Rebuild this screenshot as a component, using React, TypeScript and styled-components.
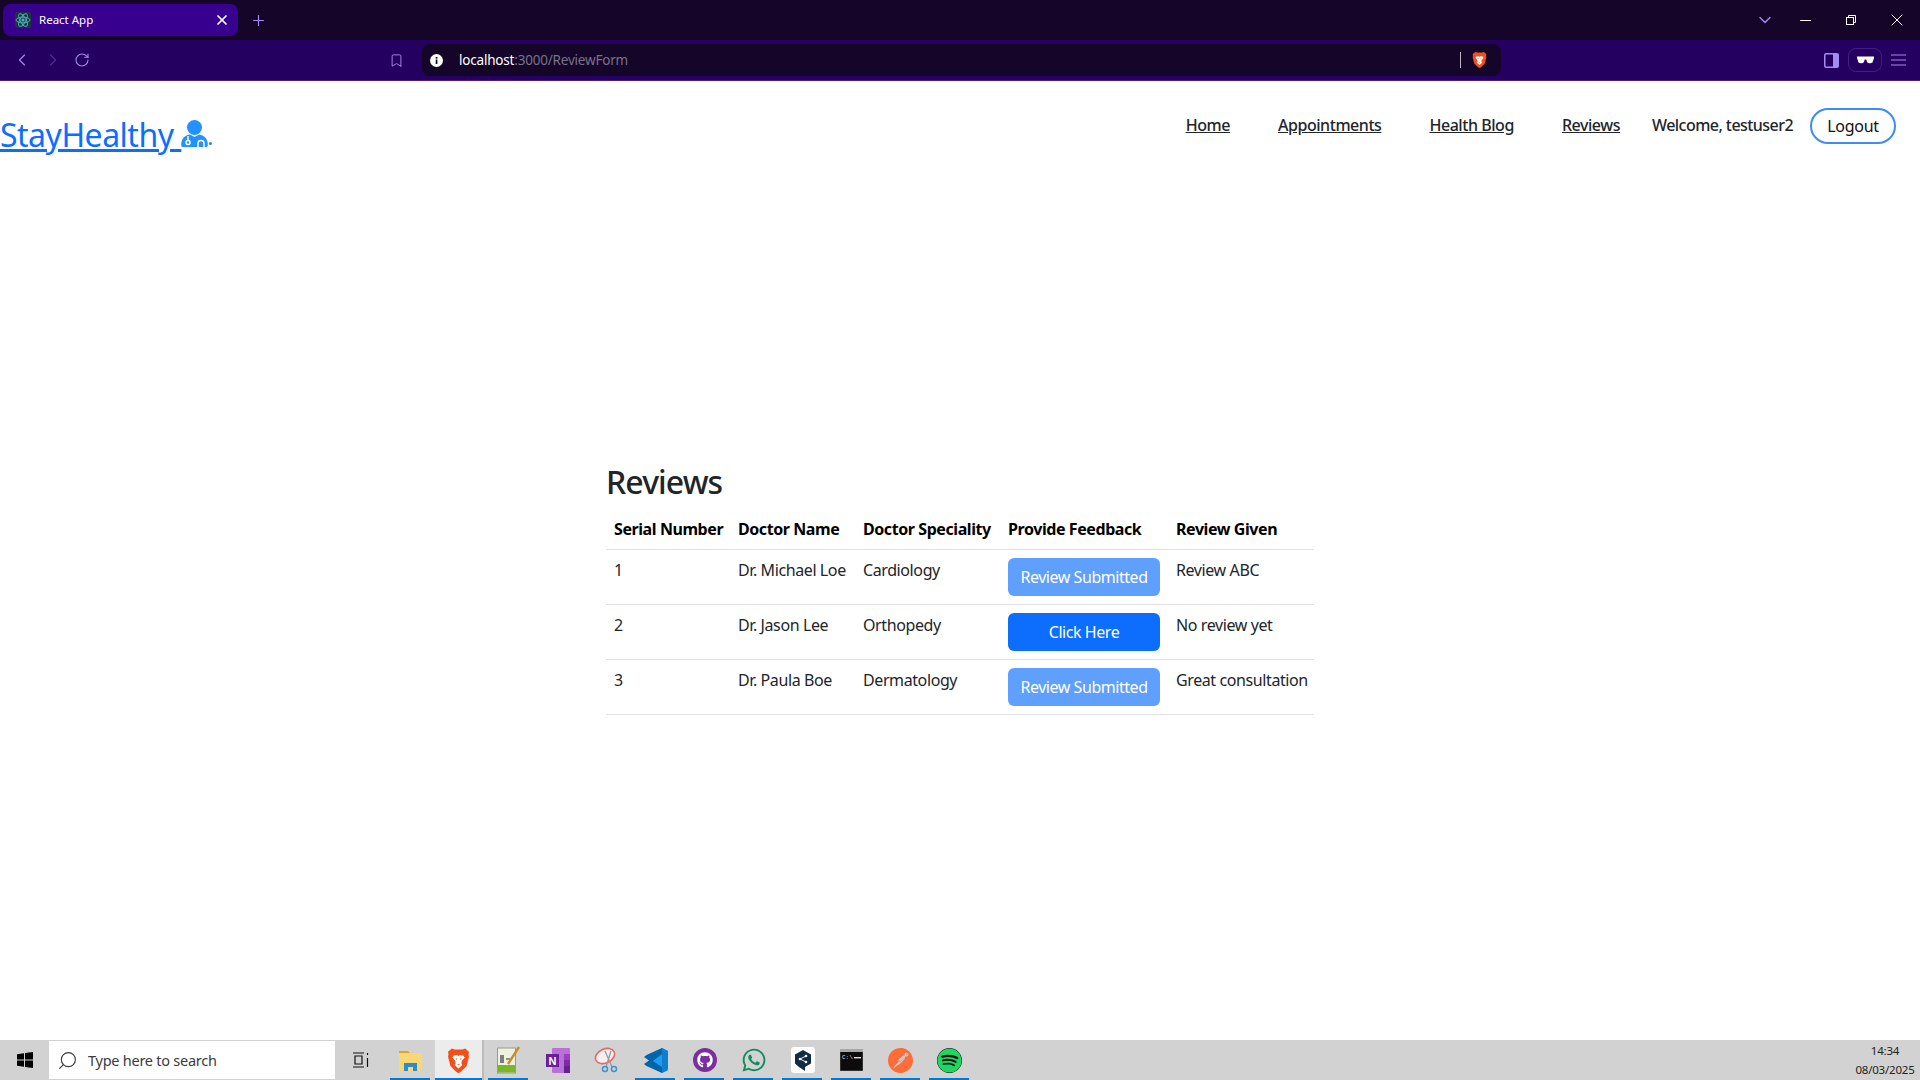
import styled, { createGlobalStyle } from 'styled-components'
import { ChevronDown, ChevronLeft, ChevronRight, Bookmark, Minus, Plus, RotateCw, X, Search } from 'lucide-react'
import { FaGithub, FaWhatsapp, FaSpotify } from 'react-icons/fa'
import { SiPostman } from 'react-icons/si'
import type { ReactNode } from 'react'

const GlobalStyle = createGlobalStyle`
  html, body {
    margin: 0;
    padding: 0;
    height: 100%;
    background: #fff;
  }
  * { box-sizing: border-box; }
  body {
    font-family: "Noto Sans", "Open Sans", sans-serif;
    color: #212529;
  }
`

const Screen = styled.div`
  width: 1920px;
  height: 1080px;
  display: flex;
  flex-direction: column;
  overflow: hidden;
`

/* browser chrome */
const TabStrip = styled.div`
  height: 40px;
  background: #150529;
  display: flex;
  align-items: center;
  padding-left: 3px;
  color: #a58cf0;
`

const Tab = styled.div`
  width: 235px;
  height: 32px;
  background: #38008e;
  border-radius: 8px;
  display: flex;
  align-items: center;
  padding: 0 8px 0 12px;
  color: #fff;
  font-size: 11.5px;
`

const TabTitle = styled.span`
  margin: 0 0 2px 8px;
  flex: 1;
`

const NewTab = styled.div`
  margin-left: 12px;
  display: flex;
`

const WindowControls = styled.div`
  margin-left: auto;
  display: flex;
  align-items: center;
  color: #fff;
`

const TabList = styled.span`
  width: 34px;
  display: flex;
  justify-content: center;
  color: #a58cf0;
`

const WindowButton = styled.span`
  width: 46px;
  display: flex;
  justify-content: center;
`

const Toolbar = styled.div`
  height: 41px;
  background: #240060;
  border-bottom: 1px solid #4a1a8c;
  display: flex;
  align-items: center;
  padding: 0 14px 0 12px;
  color: #a58cf0;
`

const NavButtons = styled.div`
  display: flex;
  align-items: center;
  gap: 11px;
  margin-right: 299px;
`

const UrlBar = styled.div`
  width: 1079px;
  height: 32px;
  margin-left: 18px;
  border-radius: 8px;
  background: #150529;
  display: flex;
  align-items: center;
  padding: 0 14px 0 8px;
  font-size: 13.5px;
  color: #fff;
`

const UrlText = styled.span`
  margin-left: 16px;
  flex: 1;
  letter-spacing: -0.2px;
`

const UrlMuted = styled.span`
  color: #78728a;
`

const UrlDivider = styled.span`
  width: 1px;
  height: 16px;
  background: #b9b4c4;
  margin-right: 11px;
`

const ToolbarRight = styled.div`
  margin-left: auto;
  display: flex;
  align-items: center;
  gap: 9px;
`

const GlassesBox = styled.div`
  width: 34px;
  height: 24px;
  border: 1px solid #43207f;
  border-radius: 8px;
  display: flex;
  align-items: center;
  justify-content: center;
`

/* page */
const Page = styled.main`
  flex: 1;
  background: #fff;
  display: flex;
  flex-direction: column;
`

const Header = styled.header`
  height: 86px;
  display: flex;
  justify-content: space-between;
  padding-right: 24px;
`

const Logo = styled.a`
  display: flex;
  align-items: flex-start;
  padding-top: 30px;
  font-size: 32px;
  line-height: 48px;
  color: #0d6efd;
  text-decoration: underline;
  white-space: pre;
  letter-spacing: -0.5px;
`

const LogoMark = styled.span`
  display: flex;
  align-items: flex-end;
  height: 27px;
  margin-top: 9px;
  color: #2192ff;
`

const LogoDot = styled.span`
  width: 3px;
  height: 3px;
  margin: 0 0 2px 1px;
  border-radius: 50%;
  background: #2b7cd6;
`

const Menu = styled.nav`
  display: flex;
  align-items: flex-start;
  padding-top: 27px;
`

const MenuLink = styled.a`
  font-size: 16px;
  line-height: 34px;
  font-weight: 500;
  color: #212529;
  text-decoration: underline;
  margin-right: 48px;
  letter-spacing: -0.45px;
  &:nth-child(4) { margin-right: 32px; }
`

const Welcome = styled.span`
  font-size: 16px;
  line-height: 34px;
  font-weight: 500;
  color: #212529;
  letter-spacing: -0.55px;
  margin-right: 17px;
`

const LogoutButton = styled.button`
  width: 86px;
  height: 36px;
  border: 2px solid #3f8bf5;
  border-radius: 18px;
  background: #fff;
  font: inherit;
  font-size: 16px;
  color: #111;
  letter-spacing: -0.3px;
  padding: 0;
`

const Content = styled.section`
  width: 708px;
  margin: 0 0 0 606px;
  padding-top: 294px;
`

const Title = styled.h1`
  margin: 0 0 7px;
  font-size: 32px;
  line-height: 42px;
  font-weight: 500;
  color: #212529;
  letter-spacing: -0.9px;
`

const Table = styled.table`
  width: 708px;
  table-layout: fixed;
  border-collapse: collapse;
  font-size: 16px;
  letter-spacing: -0.4px;
`

const HeadCell = styled.th`
  height: 39px;
  padding: 8px;
  text-align: left;
  font-weight: 700;
  color: #000;
  border-bottom: 1px solid #dee2e6;
  white-space: nowrap;
  letter-spacing: -0.42px;
`

const Cell = styled.td`
  height: 55px;
  padding: 8px;
  line-height: 24px;
  vertical-align: top;
  color: #212529;
  border-bottom: 1px solid #dee2e6;
  white-space: nowrap;
`

const FeedbackButton = styled.button<{ $done?: boolean }>`
  width: 152px;
  height: 38px;
  border: 0;
  border-radius: 6px;
  background: ${p => (p.$done ? '#5f9ffe' : '#0d6efd')};
  color: #fff;
  font: inherit;
  letter-spacing: -0.45px;
  padding: 0;
  display: block;
`

/* taskbar */
const Taskbar = styled.footer`
  height: 40px;
  background: #d2d2d2;
  display: flex;
  align-items: stretch;
  position: relative;
`

const StartButton = styled.div`
  width: 49px;
  display: flex;
  align-items: center;
  justify-content: center;
`

const SearchBox = styled.div`
  width: 286px;
  margin: 1px 0;
  background: #fff;
  display: flex;
  align-items: center;
  padding-left: 8px;
  gap: 10px;
  font-size: 14.5px;
  color: #3b3b3b;
  letter-spacing: -0.25px;
`

const TaskView = styled.div`
  width: 51px;
  display: flex;
  align-items: center;
  justify-content: center;
`

const AppCell = styled.div<{ $active?: boolean; $open?: boolean }>`
  width: 49px;
  position: relative;
  display: flex;
  align-items: center;
  justify-content: center;
  background: ${p => (p.$active ? '#ececec' : 'transparent')};
  border-right: ${p => (p.$active ? '2px solid #bcbcbc' : '0')};
  &::after {
    content: '';
    display: ${p => (p.$open ? 'block' : 'none')};
    position: absolute;
    left: ${p => (p.$active ? '0' : '4px')};
    right: ${p => (p.$active ? '0' : '5px')};
    bottom: 0;
    height: 2px;
    background: #0078d4;
  }
`

const Clock = styled.div`
  margin-left: auto;
  width: 70px;
  display: flex;
  flex-direction: column;
  align-items: center;
  justify-content: center;
  gap: 4px;
  font-size: 11.5px;
  line-height: 15px;
  color: #222;
  letter-spacing: -0.2px;
`

const RoundBadge = styled.span<{ $bg: string }>`
  width: 24px;
  height: 24px;
  border-radius: 50%;
  background: ${p => p.$bg};
  display: flex;
  align-items: center;
  justify-content: center;
  color: #fff;
`

function ReactFavicon() {
  return (
    <svg width="16" height="16" viewBox="0 0 16 16">
      <rect width="16" height="16" rx="2" fill="#20333a" />
      <g fill="none" stroke="#4db6c6" strokeWidth="0.9">
        <ellipse cx="8" cy="8" rx="7" ry="2.8" />
        <ellipse cx="8" cy="8" rx="7" ry="2.8" transform="rotate(60 8 8)" />
        <ellipse cx="8" cy="8" rx="7" ry="2.8" transform="rotate(120 8 8)" />
      </g>
      <circle cx="8" cy="8" r="1.5" fill="#4db6c6" />
    </svg>
  )
}

function BraveIcon({ size }: { size: number }) {
  return (
    <svg width={size} height={size * 1.16} viewBox="0 0 24 28">
      <path d="M5 1.5 L8 2.5 L16 2.5 L19 1.5 L23 5 L22.5 8 L23 10 L20.5 20 L14.5 26 L12 27.5 L9.5 26 L3.5 20 L1 10 L1.5 8 L1 5 Z" fill="#f1501c" />
      <path d="M7 9 L10.5 8.5 L12 9.5 L13.5 8.5 L17 9 L18.5 11 L15.5 14.5 L15 17 L16 19 L12 22.5 L8 19 L9 17 L8.5 14.5 L5.5 11 Z" fill="#fff" />
      <path d="M9 11.5 L11 12.5 L9.5 13.5 Z M15 11.5 L13 12.5 L14.5 13.5 Z M10.5 18 H13.5 L12 19.5 Z" fill="#f1501c" />
    </svg>
  )
}

function DoctorIcon() {
  return (
    <svg width="27" height="27" viewBox="0 0 27 27">
      <circle cx="13.5" cy="7.5" r="7.5" fill="currentColor" />
      <path d="M2 27 C0 27 0 25 0.5 22 C1.3 17.5 5 15 9 14.5 L13.5 17 L18 14.5 C22 15 25.7 17.5 26.5 22 C27 25 27 27 25 27 Z" fill="currentColor" />
      <g fill="none" stroke="#fff" strokeWidth="1.5">
        <circle cx="7" cy="22.5" r="2" />
        <path d="M7 20 V16 M17 27 V23 C17 19.5 23 19.5 23 23 V27" />
      </g>
    </svg>
  )
}

function SidePanelIcon() {
  return (
    <svg width="15" height="15" viewBox="0 0 15 15">
      <rect x="0.75" y="0.75" width="13.5" height="13.5" rx="1.5" fill="none" stroke="#a58cf0" strokeWidth="1.5" />
      <rect x="9" y="0.75" width="5.25" height="13.5" fill="#a58cf0" />
    </svg>
  )
}

function GlassesIcon() {
  return (
    <svg width="17" height="8" viewBox="0 0 17 8">
      <path d="M0 0.5 H17 V2 L15.5 6.5 C14 7.8 11 7.5 10 6 L9.3 3.5 H7.7 L7 6 C6 7.5 3 7.8 1.5 6.5 L0 2 Z" fill="#fff" />
    </svg>
  )
}

function HamburgerIcon() {
  return (
    <svg width="15" height="12" viewBox="0 0 15 12" stroke="#a58cf0" strokeWidth="1.2">
      <path d="M0 1 H15 M0 6 H15 M0 11 H15" />
    </svg>
  )
}

function RestoreIcon() {
  return (
    <svg width="10" height="10" viewBox="0 0 10 10" fill="none" stroke="#fff" strokeWidth="1">
      <rect x="0.5" y="2.5" width="7" height="7" />
      <path d="M2.5 2.5 V0.5 H9.5 V7.5 H7.5" />
    </svg>
  )
}

function InfoIcon() {
  return (
    <svg width="13" height="13" viewBox="0 0 13 13">
      <circle cx="6.5" cy="6.5" r="6.5" fill="#fff" />
      <rect x="5.7" y="5.5" width="1.7" height="4.5" fill="#150529" />
      <rect x="5.7" y="3" width="1.7" height="1.7" fill="#150529" />
    </svg>
  )
}

function WindowsIcon() {
  return (
    <svg width="16" height="16" viewBox="0 0 16 16" fill="#000">
      <path d="M0 2.3 L7 1.3 V7.5 H0 Z M8 1.1 L16 0 V7.5 H8 Z M0 8.5 H7 V14.7 L0 13.7 Z M8 8.5 H16 V16 L8 14.9 Z" />
    </svg>
  )
}

function TaskViewIcon() {
  return (
    <svg width="16" height="16" viewBox="0 0 16 16" fill="none" stroke="#111" strokeWidth="1.2">
      <path d="M0 1 H11 M0 15 H11 M2 4 H9 V12 H2 Z M14.5 1 V3 M14.5 6 V15" />
    </svg>
  )
}

function FolderIcon() {
  return (
    <svg width="23" height="21" viewBox="0 0 23 21">
      <path d="M0 1 H9 L11 3 V6 H0 Z" fill="#e0a526" />
      <rect y="3" width="23" height="18" fill="#f8d775" />
      <path d="M5 21 V13 H18 V21 H14 V17 H9 V21 Z" fill="#2f8ad6" />
    </svg>
  )
}

function NotepadIcon() {
  return (
    <svg width="24" height="28" viewBox="0 0 24 28">
      <rect x="0.5" y="2" width="18" height="25" fill="#eef0e0" stroke="#9a9a8a" />
      <rect x="1" y="19" width="17" height="7.5" fill="#76b82a" />
      <path d="M4 9 V17 M6 9 V17 M9 13 H13" stroke="#333" strokeWidth="1.2" />
      <path d="M22 1 L11 18" stroke="#c98c2e" strokeWidth="2.4" />
    </svg>
  )
}

function OneNoteIcon() {
  return (
    <svg width="24" height="25" viewBox="0 0 24 25">
      <rect x="6" y="0" width="18" height="25" rx="1" fill="#ba6fd9" />
      <rect x="18" y="6" width="6" height="6" fill="#9a3fc0" />
      <rect x="18" y="12" width="6" height="6" fill="#7f2aa8" />
      <rect x="18" y="18" width="6" height="7" fill="#6a1f90" />
      <rect x="0" y="6" width="13" height="13" fill="#6a1f99" />
      <text x="6.5" y="16.5" fontSize="11" fontWeight="700" fill="#fff" textAnchor="middle" fontFamily="Liberation Sans, sans-serif">N</text>
    </svg>
  )
}

function SnipIcon() {
  return (
    <svg width="25" height="26" viewBox="0 0 25 26" fill="none">
      <ellipse cx="11" cy="9" rx="10" ry="7" transform="rotate(-25 11 9)" fill="#f6eeee" stroke="#e46a6a" strokeWidth="1.6" />
      <path d="M11 4 L18 20 M17 4 L12 20" stroke="#999" strokeWidth="1.3" />
      <circle cx="11" cy="22" r="2.5" stroke="#3a94d6" strokeWidth="1.6" />
      <circle cx="20" cy="22" r="2.5" stroke="#3a94d6" strokeWidth="1.6" />
    </svg>
  )
}

function VsCodeIcon() {
  return (
    <svg width="24" height="25" viewBox="0 0 24 25">
      <path d="M18 0 L24 3 V22 L18 25 L7 13 Z" fill="#1f9cf0" />
      <path d="M18 0 V25 L24 22 V3 Z" fill="#0e7fd0" />
      <path d="M2.5 7 L0 9 L5 12.5 L0 16 L2.5 18 L18 6 V0 Z M2.5 18 L18 25 V19 L8 12.5 Z" fill="#0065a9" />
    </svg>
  )
}

function DeeplIcon() {
  return (
    <svg width="24" height="26" viewBox="0 0 24 26">
      <rect width="24" height="26" rx="3" fill="#fff" />
      <path d="M12 3 L20 7.5 V16.5 L14 20 V24 L8 20 L4 16.5 V7.5 Z" fill="#0f2b46" />
      <circle cx="9" cy="12" r="1.3" fill="#fff" />
      <circle cx="15" cy="9" r="1.3" fill="#fff" />
      <circle cx="15" cy="15" r="1.3" fill="#fff" />
      <path d="M9 12 L15 9 M9 12 L15 15" stroke="#fff" strokeWidth="0.9" />
    </svg>
  )
}

function TerminalIcon() {
  return (
    <svg width="23" height="22" viewBox="0 0 23 22">
      <rect width="23" height="22" fill="#0c0c0c" stroke="#888" strokeWidth="0.6" />
      <rect width="23" height="3" fill="#a8a8a8" />
      <text x="2" y="10" fontSize="6" fill="#ddd" fontFamily="Liberation Mono, monospace">C:\</text>
      <rect x="14" y="8" width="7" height="1.4" fill="#ddd" />
    </svg>
  )
}

const rows = [
  { id: 1, doctor: 'Dr. Michael Loe', speciality: 'Cardiology', done: true, review: 'Review ABC' },
  { id: 2, doctor: 'Dr. Jason Lee', speciality: 'Orthopedy', done: false, review: 'No review yet' },
  { id: 3, doctor: 'Dr. Paula Boe', speciality: 'Dermatology', done: true, review: 'Great consultation' },
]

const columns = [124, 125, 145, 168, 146]
const headings = ['Serial Number', 'Doctor Name', 'Doctor Speciality', 'Provide Feedback', 'Review Given']

const apps: { key: string; icon: ReactNode; open?: boolean; active?: boolean }[] = [
  { key: 'files', icon: <FolderIcon />, open: true },
  { key: 'brave', icon: <BraveIcon size={23} />, open: true, active: true },
  { key: 'notepad', icon: <NotepadIcon />, open: true },
  { key: 'onenote', icon: <OneNoteIcon /> },
  { key: 'snip', icon: <SnipIcon /> },
  { key: 'vscode', icon: <VsCodeIcon />, open: true },
  { key: 'github', icon: <RoundBadge $bg="#7b2f9e"><FaGithub size={16} /></RoundBadge>, open: true },
  { key: 'whatsapp', icon: <FaWhatsapp size={26} color="#128c5e" />, open: true },
  { key: 'deepl', icon: <DeeplIcon />, open: true },
  { key: 'terminal', icon: <TerminalIcon />, open: true },
  { key: 'postman', icon: <SiPostman size={25} color="#ff6c37" />, open: true },
  { key: 'spotify', icon: <FaSpotify size={25} color="#1ed760" style={{ background: '#111', borderRadius: '50%' }} />, open: true },
]

function App() {
  return (
    <Screen>
      <GlobalStyle />
      <TabStrip>
        <Tab>
          <ReactFavicon />
          <TabTitle>React App</TabTitle>
          <X size={16} strokeWidth={2.6} />
        </Tab>
        <NewTab><Plus size={17} strokeWidth={1.6} /></NewTab>
        <WindowControls>
          <TabList><ChevronDown size={20} strokeWidth={1.6} /></TabList>
          <WindowButton><Minus size={17} strokeWidth={1.4} /></WindowButton>
          <WindowButton><RestoreIcon /></WindowButton>
          <WindowButton><X size={20} strokeWidth={1.2} /></WindowButton>
        </WindowControls>
      </TabStrip>

      <Toolbar>
        <NavButtons>
          <ChevronLeft size={20} strokeWidth={1.4} />
          <ChevronRight size={20} strokeWidth={1.4} color="#4f2e96" />
          <RotateCw size={16} strokeWidth={1.6} />
        </NavButtons>
        <Bookmark size={15} strokeWidth={1.5} />
        <UrlBar>
          <InfoIcon />
          <UrlText>localhost<UrlMuted>:3000/ReviewForm</UrlMuted></UrlText>
          <UrlDivider />
          <BraveIcon size={15} />
        </UrlBar>
        <ToolbarRight>
          <SidePanelIcon />
          <GlassesBox><GlassesIcon /></GlassesBox>
          <HamburgerIcon />
        </ToolbarRight>
      </Toolbar>

      <Page>
        <Header>
          <Logo href="#">StayHealthy <LogoMark><DoctorIcon /><LogoDot /></LogoMark></Logo>
          <Menu>
            <MenuLink href="#">Home</MenuLink>
            <MenuLink href="#">Appointments</MenuLink>
            <MenuLink href="#">Health Blog</MenuLink>
            <MenuLink href="#">Reviews</MenuLink>
            <Welcome>Welcome, testuser2</Welcome>
            <LogoutButton>Logout</LogoutButton>
          </Menu>
        </Header>

        <Content>
          <Title>Reviews</Title>
          <Table>
            <colgroup>
              {columns.map((w, i) => <col key={i} width={w} />)}
            </colgroup>
            <thead>
              <tr>
                {headings.map(h => <HeadCell key={h}>{h}</HeadCell>)}
              </tr>
            </thead>
            <tbody>
              {rows.map(r => (
                <tr key={r.id}>
                  <Cell>{r.id}</Cell>
                  <Cell>{r.doctor}</Cell>
                  <Cell>{r.speciality}</Cell>
                  <Cell>
                    <FeedbackButton $done={r.done}>{r.done ? 'Review Submitted' : 'Click Here'}</FeedbackButton>
                  </Cell>
                  <Cell>{r.review}</Cell>
                </tr>
              ))}
            </tbody>
          </Table>
        </Content>
      </Page>

      <Taskbar>
        <StartButton><WindowsIcon /></StartButton>
        <SearchBox>
          <Search size={21} strokeWidth={1.3} style={{ transform: 'scaleX(-1)' }} />
          Type here to search
        </SearchBox>
        <TaskView><TaskViewIcon /></TaskView>
        {apps.map(a => (
          <AppCell key={a.key} $open={a.open} $active={a.active}>{a.icon}</AppCell>
        ))}
        <Clock>
          <span>14:34</span>
          <span>08/03/2025</span>
        </Clock>
      </Taskbar>
    </Screen>
  )
}

export default App
